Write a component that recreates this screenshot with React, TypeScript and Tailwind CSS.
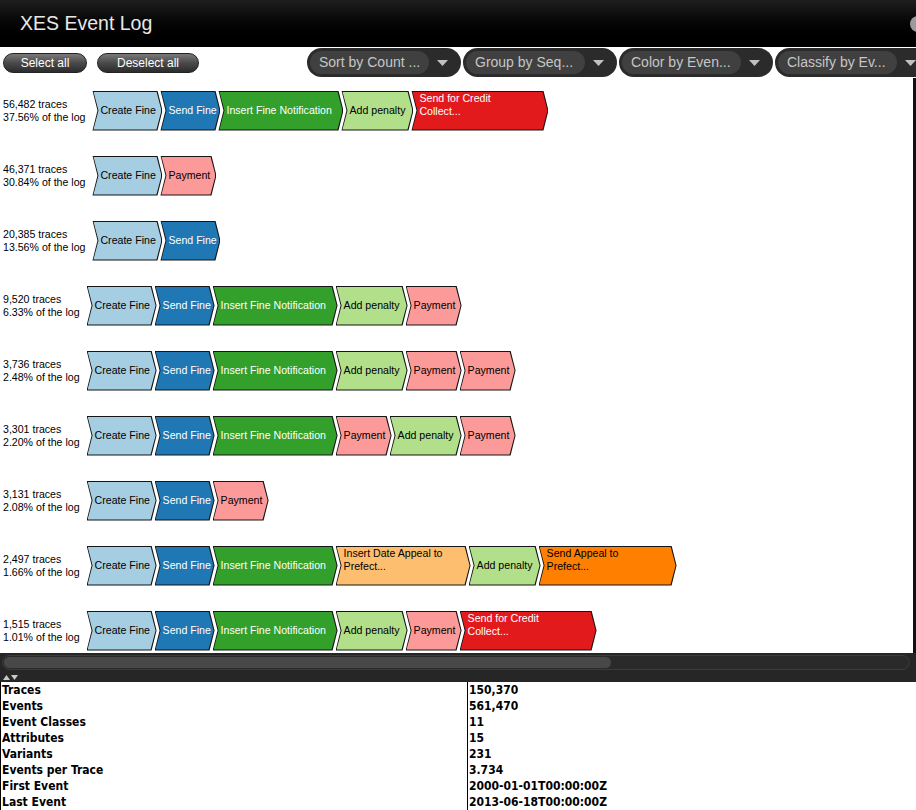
import React from "react";

type Step = { lines: string[]; color: string; text: string; w: number };

const CF: Step = { lines: ["Create Fine"], color: "bg-[#a6cee3]", text: "text-black", w: 70 };
const SF: Step = { lines: ["Send Fine"], color: "bg-[#1f78b4]", text: "text-white", w: 60 };
const IFN: Step = { lines: ["Insert Fine Notification"], color: "bg-[#33a02c]", text: "text-white", w: 125 };
const AP: Step = { lines: ["Add penalty"], color: "bg-[#b2df8a]", text: "text-black", w: 72 };
const PAY: Step = { lines: ["Payment"], color: "bg-[#fb9a99]", text: "text-black", w: 56 };
const SCC: Step = { lines: ["Send for Credit", "Collect..."], color: "bg-[#e31a1c]", text: "text-white", w: 137 };
const IDA: Step = { lines: ["Insert Date Appeal to", "Prefect..."], color: "bg-[#fdbf6f]", text: "text-black", w: 135 };
const SAP: Step = { lines: ["Send Appeal to", "Prefect..."], color: "bg-[#ff7f00]", text: "text-black", w: 138 };

const variants: { traces: string; pct: string; steps: Step[] }[] = [
  { traces: "56,482", pct: "37.56%", steps: [CF, SF, IFN, AP, SCC] },
  { traces: "46,371", pct: "30.84%", steps: [CF, PAY] },
  { traces: "20,385", pct: "13.56%", steps: [CF, SF] },
  { traces: "9,520", pct: "6.33%", steps: [CF, SF, IFN, AP, PAY] },
  { traces: "3,736", pct: "2.48%", steps: [CF, SF, IFN, AP, PAY, PAY] },
  { traces: "3,301", pct: "2.20%", steps: [CF, SF, IFN, PAY, AP, PAY] },
  { traces: "3,131", pct: "2.08%", steps: [CF, SF, PAY] },
  { traces: "2,497", pct: "1.66%", steps: [CF, SF, IFN, IDA, AP, SAP] },
  { traces: "1,515", pct: "1.01%", steps: [CF, SF, IFN, AP, PAY, SCC] },
];

const stats: [string, string][] = [
  ["Traces", "150,370"],
  ["Events", "561,470"],
  ["Event Classes", "11"],
  ["Attributes", "15"],
  ["Variants", "231"],
  ["Events per Trace", "3.734"],
  ["First Event", "2000-01-01T00:00:00Z"],
  ["Last Event", "2013-06-18T00:00:00Z"],
];

function Chevron({ step, first }: { step: Step; first: boolean }) {
  const multi = step.lines.length > 1;
  return (
    <div
      className={`h-[40px] shrink-0 bg-[#151515] p-px [clip-path:polygon(0_0,calc(100%_-_5px)_0,100%_50%,calc(100%_-_5px)_100%,0_100%,5px_50%)] ${first ? "" : "-ml-[2px]"}`}
      style={{ width: step.w }}
    >
      <div
        className={`h-full ${step.color} ${step.text} flex flex-col ${multi ? "justify-start" : "justify-center"} whitespace-nowrap pl-[7px] text-[10.6px] leading-[13px] [clip-path:polygon(0_0,calc(100%_-_5px)_0,100%_50%,calc(100%_-_5px)_100%,0_100%,5px_50%)]`}
      >
        {step.lines.map((l) => (
          <span key={l}>{l}</span>
        ))}
      </div>
    </div>
  );
}

function Combo({ label }: { label: string }) {
  return (
    <div className="flex h-[29px] w-[154px] shrink-0 items-center rounded-full bg-[#2b2b2b]">
      <div className="ml-[3px] flex h-[23px] w-[119px] items-center rounded-full bg-[#404040] pl-[9px] text-[14px] text-[#c6c6c6]">
        {label}
      </div>
      <svg width="11" height="6" viewBox="0 0 11 6" className="ml-[8px]">
        <polygon points="0,0 11,0 5.5,6" fill="#c0c0c0" />
      </svg>
    </div>
  );
}

function Pill({ label, w }: { label: string; w: number }) {
  return (
    <button
      className="flex h-[20px] shrink-0 items-center justify-center rounded-full border border-[#222] bg-gradient-to-b from-[#7a7a7a] via-[#4a4a4a] to-[#2c2c2c] text-[12px] text-white"
      style={{ width: w }}
    >
      {label}
    </button>
  );
}

export default function App() {
  return (
    <div className="flex h-[810px] w-[916px] flex-col overflow-hidden bg-white font-['Liberation_Sans',Arial,sans-serif]">
      <div className="flex h-[47px] shrink-0 items-center justify-between bg-gradient-to-b from-[#1e1e1e] to-black pl-[20px]">
        <span className="text-[19.5px] text-[#e8e8e8]">XES Event Log</span>
        <div className="-mr-[10px] h-[16px] w-[16px] rounded-full bg-[#9a9a9a]" />
      </div>

      <div className="flex h-[31px] shrink-0 items-center overflow-hidden">
        <div className="ml-[3px] flex gap-[10px]">
          <Pill label="Select all" w={84} />
          <Pill label="Deselect all" w={102} />
        </div>
        <div className="ml-[108px] flex gap-[2px]">
          <Combo label="Sort by Count ..." />
          <Combo label="Group by Seq..." />
          <Combo label="Color by Even..." />
          <Combo label="Classify by Ev..." />
        </div>
      </div>

      <div className="flex h-[575px] shrink-0">
        <div className="flex-1 overflow-hidden">
          {variants.map((v, i) => (
            <div key={i} className="flex h-[65px] items-center">
              <div className="ml-[3px] mr-[7px] shrink-0 text-[10.6px] leading-[13px] text-black">
                <div>{v.traces} traces</div>
                <div>{v.pct} of the log</div>
              </div>
              <div className="flex">
                {v.steps.map((s, j) => (
                  <Chevron key={j} step={s} first={j === 0} />
                ))}
              </div>
            </div>
          ))}
        </div>
        <div className="w-[3px] bg-[#111]" />
      </div>

      <div className="shrink-0 bg-[#262626]">
        <div className="flex h-[19px] items-center px-[2px]">
          <div className="flex h-[15px] w-[908px] items-center rounded-full border border-[#3c3c3c] bg-[#2a2a2a] p-px">
            <div className="h-full w-[607px] rounded-full bg-[#484848]" />
          </div>
        </div>
        <div className="flex h-[10px] items-center gap-px pl-[3px]">
          <svg width="7" height="5" viewBox="0 0 7 5">
            <polygon points="3.5,0 7,5 0,5" fill="#c8c8c8" />
          </svg>
          <svg width="7" height="5" viewBox="0 0 7 5">
            <polygon points="0,0 7,0 3.5,5" fill="#c8c8c8" />
          </svg>
        </div>
      </div>

      <div className="flex-1 bg-white font-['DejaVu_Sans_Condensed','DejaVu_Sans',sans-serif] text-[12px] font-bold text-black">
        {stats.map(([k, val]) => (
          <div key={k} className="flex h-[16px] items-center leading-[16px]">
            <div className="h-full w-[467px] border-l border-black pl-[1px]">{k}</div>
            <div className="h-full flex-1 border-l border-black pl-[1px]">{val}</div>
          </div>
        ))}
      </div>
    </div>
  );
}
